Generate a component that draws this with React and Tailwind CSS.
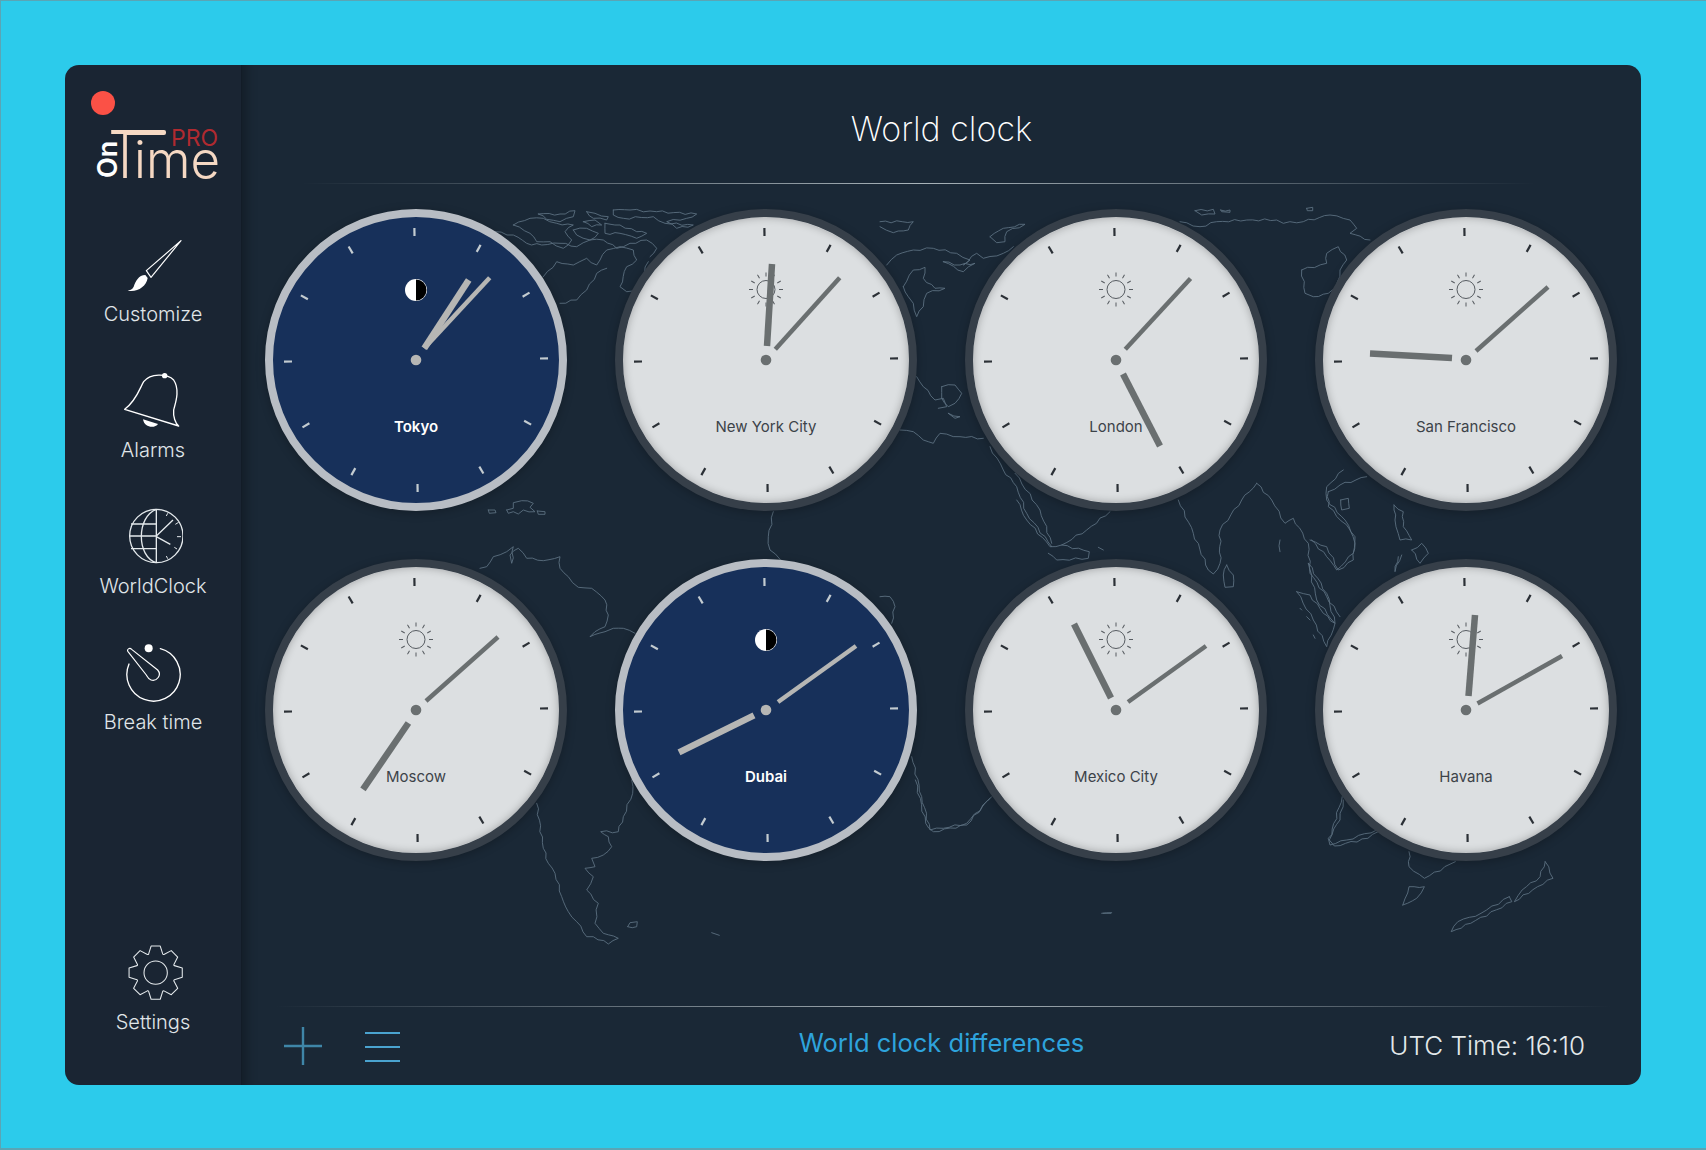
const CLOCKS = [
  { city: 'Tokyo', night: true, hour: [8.3, -11.7, 52.7, -80], min: [8.3, -11.7, 73.7, -82.3] },
  { city: 'New York City', hour: [1, -14, 6, -96], min: [9.3, -10.7, 73.7, -82.3] },
  { city: 'London', hour: [7, 14, 44, 86], min: [9.3, -10.7, 74.5, -81.6] },
  { city: 'San Francisco', hour: [-14, -2, -96, -6.5], min: [10, -9, 82, -73] },
  { city: 'Moscow', hour: [-7.6, 13, -53, 79.4], min: [10, -9, 82, -73] },
  { city: 'Dubai', night: true, hour: [-12, 5.4, -87, 42.4], min: [12, -8, 90, -64] },
  { city: 'Mexico City', hour: [-5, -12, -42, -86], min: [12, -8, 90, -64] },
  { city: 'Havana', hour: [2.5, -14, 9, -95], min: [11.5, -6.5, 96, -54] },
]

// coastlines traced from crops: [left, top, x scale, y scale, polylines]
const COASTS = [
  [480, 190, 3, 3, [
    '100,105 150,85 190,85 230,100 280,105 255,125 275,150 250,175 210,155 170,155 150,130 100,105',
    '175,72 240,72 285,62 280,80 240,95 200,88 175,72',
    '320,65 345,70 385,80 380,90 340,85 320,65',
    '400,60 450,60 530,65 650,72 620,85 560,95 590,115 640,105 555,100 520,80 430,85 400,75 400,60',
    '280,120 320,115 355,130 330,150 290,135 280,120',
    '310,95 345,90 365,105 335,110 310,95',
    '375,100 420,105 470,125 500,130 470,145 420,130 375,130 375,100',
    '45,125 100,135 140,160 185,165 240,160 290,170 330,150 370,150 410,175 450,160 500,150 530,175 510,200',
    '190,260 230,215 280,225 320,205 350,225 380,180 420,170 460,180 470,210 440,230 420,290 440,305 470,300 505,215',
    '240,340 290,330 320,300 350,250 380,235',
  ]],
  [480, 500, 3, 3, [
    '25,30 45,30 48,38 28,40 25,30',
    '80,30 100,25 100,8 125,2 160,10 150,22 165,35 130,30 115,42 100,35 85,40 80,30',
    '172,33 195,35 195,43 175,43 172,33',
    '0,205 20,200 40,170 80,155 100,140 95,190 90,165 115,145 140,175 190,182 240,170 240,205 265,230 295,262 335,265 375,300 385,345 375,380 345,395 330,410 375,395 400,385 430,385 465,400',
    '455,840 458,880 430,950 415,995 362,995 385,1010 395,1040 370,1065 335,1075 345,1100 315,1105 340,1130 320,1170 355,1210 345,1270 370,1300 415,1315 385,1332 340,1310 320,1310 290,1265 265,1235 245,1190 225,1120 205,1090 190,1045 170,910',
    '443,1280 450,1268 472,1265 470,1280 443,1280',
    '695,1298 718,1306',
    '880,35 865,110 870,150 900,178',
  ]],
  [880, 190, 3, 3, [
    '0,95 100,95 85,120 40,128 0,110',
    '330,140 370,115 435,103 380,125 375,155 350,158 330,140',
    '20,225 50,195 100,180 160,175 230,190 270,210 250,225 290,190 310,205 370,190 400,170',
    '190,215 240,225 285,220 250,245 190,215',
    '70,290 100,240 135,232 130,265 165,295 195,295 140,310 130,350 110,380 100,340 85,320 70,290',
    '110,560 130,590 165,630 190,625 200,650 175,655',
    '185,590 225,585 245,610 225,640 205,650 185,625 185,590',
    '205,670 240,680 225,685 205,670',
    '60,720 100,725 130,750 160,760 180,730 240,740 310,745',
    '330,770 370,840 410,890 440,970 515,1070',
    '405,850 480,960 515,1060',
    '900,95 960,110 1010,95 1100,90 1190,90 1210,100 1270,95 1350,75 1410,90 1430,115 1410,130 1470,150',
    '945,62 1000,58 1005,72 965,75 945,62',
    '1022,60 1050,60 1050,67 1025,65 1022,60',
    '1280,55 1298,52 1298,62 1282,62 1280,55',
    '1265,240 1340,220 1340,190 1375,170 1400,210 1380,240 1370,295 1345,310 1300,320 1275,310 1265,240',
  ]],
  [880, 500, 3, 3, [
    '895,0 940,100 985,210 1000,222 1020,190 1020,90 1085,0 1130,-50',
    '1040,195 1060,225 1060,260 1035,262 1030,225 1040,195',
    '1130,-50 1175,0 1215,70 1240,55 1285,130 1290,220 1340,290 1380,350',
    '1295,120 1340,170 1370,210 1420,160 1425,110 1395,60 1340,0 1340,-40 1390,-90',
    '1285,190 1340,280 1365,370 1310,300 1285,190',
    '1250,275 1290,285 1330,340 1365,370 1340,440 1300,360 1250,275',
    '1200,120 1200,155',
    '1260,325 1265,330',
    '1280,350 1290,360',
    '1300,405 1305,415',
    '95,770 125,890 150,990 190,985 260,970 335,890',
    '0,290 30,290 45,320 35,370',
    '410,0 440,60 510,140 545,135 620,90 690,35',
    '505,160 530,180 625,175 628,155 545,135',
    '655,142 670,150',
    '1390,900 1380,960 1345,1015 1350,1035 1400,1020 1490,990',
    '665,1240 695,1238',
  ]],
  [1240, 190, 3, 3, [
    '462,945 490,965 490,1010 515,1050 480,1050 465,990 462,945',
    '515,1080 545,1060 565,1090 540,1120 515,1080',
    '475,1100 465,1145 485,1095',
    '265,905 300,885 380,860',
    '265,905 265,950 330,1020 345,1060 340,1110 295,1140 260,1070 210,1050',
    '302,930 325,925 328,955 305,960 302,930',
  ]],
  [900, 780, 1.945, 3, [
    '30,0 50,130 65,155 130,135 175,55',
    '860,50 835,180 845,198 910,175 930,155',
    '990,215 990,260 1020,295 1080,245',
    '978,375 990,320 1020,320 1005,355 978,375',
    '1255,245 1245,290 1210,330 1195,365 1240,320 1270,295 1255,245',
    '1185,350 1130,400 1085,425 1072,455 1110,430 1190,365 1185,350',
    '395,400 410,400',
  ]],
]

const coastPath = (ox, oy, kx, ky, line) => {
  const pts = line.split(' ').map((p) => {
    const [x, y] = p.split(',').map(Number)
    return [ox + x / kx, oy + y / ky]
  })
  let d = `M${pts[0][0].toFixed(1)},${pts[0][1].toFixed(1)}`
  pts.slice(1).forEach(([x, y], i) => {
    const [px, py] = pts[i]
    const len = Math.hypot(x - px, y - py)
    const steps = Math.max(1, Math.round(len / 6))
    for (let s = 1; s <= steps; s++) {
      // small fixed wobble so the outlines read as coast and not as straight segments
      const wob = s === steps ? 0 : Math.sin((px + py) * 3.1 + s * 2.3) * 1.1
      const qx = px + ((x - px) * s) / steps - ((y - py) / len) * wob
      const qy = py + ((y - py) * s) / steps + ((x - px) / len) * wob
      d += `L${qx.toFixed(1)},${qy.toFixed(1)}`
    }
  })
  return d
}

const COAST_PATHS = COASTS.flatMap(([ox, oy, kx, ky, lines]) => lines.map((l) => coastPath(ox, oy, kx, ky, l)))

function WorldMap({ viewBox, stroke, opacity, width }) {
  return (
    <svg className="absolute inset-0 w-full h-full" viewBox={viewBox} fill="none" stroke={stroke} strokeOpacity={opacity} strokeWidth={width} strokeLinejoin="round" strokeLinecap="round">
      {COAST_PATHS.map((d, i) => <path key={i} d={d} />)}
    </svg>
  )
}

function Clock({ data, index }) {
  const { city, night, hour, min } = data
  const cx = 416 + (index % 4) * 350
  const cy = 360 + Math.floor(index / 4) * 350
  const handColor = night ? '#b6b6b4' : '#6a6f70'
  const tickColor = night ? '#c3cbd0' : '#2b3036'

  return (
    <div className={`relative w-[302px] h-[302px] rounded-full border-[8px] overflow-hidden shadow-[0_2px_10px_rgba(0,0,0,0.25)]
      ${night ? 'border-[#b8bdc4] bg-[#17305a]' : 'border-[#363f49] bg-[#dcdfe1]'}`}>
      <WorldMap viewBox={`${cx - 143} ${cy - 143} 286 286`} stroke="#ffffff" opacity={night ? 0.07 : 0.4} width={1} />
      {!night && <div className="absolute inset-0 rounded-full shadow-[inset_0_0_9px_rgba(0,0,0,0.28)]" />}
      <svg className="absolute inset-0" width="286" height="286" viewBox="-143 -143 286 286">
        {Array.from({ length: 12 }, (_, h) => (
          <line key={h} x1="0" y1="-132" x2="0" y2="-124" stroke={tickColor} strokeWidth="2.2" transform={`rotate(${h * 30 - 0.7})`} />
        ))}
        {night ? (
          <g>
            <circle cx="0" cy="-70" r="11" fill="#ffffff" />
            <path d="M0,-80.5 A10.5,10.5 0 0 1 0,-59.5 Z" fill="#000000" />
          </g>
        ) : (
          <g stroke="#565b60" strokeWidth="1" fill="none">
            <circle cx="0" cy="-70.5" r="9" />
            {Array.from({ length: 12 }, (_, r) => (
              <line key={r} x1="0" y1="-83.5" x2="0" y2="-87.5" transform={`rotate(${r * 30} 0 -70.5)`} />
            ))}
          </g>
        )}
        <line x1={hour[0]} y1={hour[1]} x2={hour[2]} y2={hour[3]} stroke={handColor} strokeWidth="6.5" />
        <line x1={min[0]} y1={min[1]} x2={min[2]} y2={min[3]} stroke={handColor} strokeWidth="4.5" />
        <circle cx="0" cy="0" r="5.3" fill={handColor} />
      </svg>
      <span className={`absolute left-0 right-0 top-[198px] text-center text-[15px] leading-[24px] ${night ? 'text-white font-semibold' : 'text-[#3c4349]'}`}>
        {city}
      </span>
    </div>
  )
}

function Logo() {
  return (
    <svg className="overflow-visible" width="140" height="60" viewBox="90 125 140 60">
      <text x="117" y="178" transform="rotate(-90 117 178)" fontSize="27" fontWeight="600" fill="#ffffff" fontFamily="Inter, sans-serif">On</text>
      <text x="108.5" y="178" fontSize="66" fontWeight="300" fill="#f5d8c3" fontFamily="Inter, sans-serif" textLength="33" lengthAdjust="spacingAndGlyphs">T</text>
      <rect x="125" y="130" width="41" height="5" rx="2" fill="#f5d8c3" />
      <text x="134" y="178" fontSize="51" fontWeight="300" fill="#f5d8c3" fontFamily="Inter, sans-serif" textLength="86" lengthAdjust="spacingAndGlyphs">ime</text>
      <text x="171" y="146" fontSize="23" fontWeight="400" fill="#b02a30" fontFamily="Inter, sans-serif">PRO</text>
    </svg>
  )
}

const gearPath = () => {
  const cx = 286
  const cy = 158
  let d = ''
  for (let i = 0; i < 8; i++) {
    const a = (i * Math.PI) / 4 - Math.PI / 2
    const at = (r, off) => `${(cx + r * Math.cos(a + off)).toFixed(1)},${(cy + r * Math.sin(a + off)).toFixed(1)}`
    d += `${i ? 'L' : 'M'}${at(60, -0.36)} L${at(81, -0.17)} L${at(81, 0.17)} L${at(60, 0.36)} Q${at(58, 0.39)} ${at(60, 0.43)} `
  }
  return d + 'Z'
}

const NAV = [
  {
    label: 'Customize',
    box: '188 528 180 180',
    icon: (
      <>
        <path d="M258,632 L362,542 L272,652 Z" fill="none" stroke="#fff" strokeWidth="3.5" strokeLinejoin="round" />
        <path d="M255,645 C235,645 225,665 220,680 C215,690 208,690 202,692 C230,698 258,680 262,654 Z" fill="#fff" />
      </>
    ),
  },
  {
    label: 'Alarms',
    box: '188 36 180 180',
    icon: (
      <>
        <path d="M193,148 C230,120 240,80 250,65 C270,40 320,40 340,60 C360,90 345,130 340,150 C338,170 345,190 355,198 Z" fill="none" stroke="#fff" strokeWidth="4" strokeLinejoin="round" />
        <circle cx="313" cy="47" r="8" fill="#fff" />
        <path d="M248,178 C252,205 285,205 293,192 Z" fill="#fff" />
      </>
    ),
  },
  {
    label: 'WorldClock',
    box: '188 444 180 180',
    icon: (
      <g fill="none" stroke="#e4e9ec" strokeWidth="4">
        <circle cx="288" cy="528" r="80" />
        <path d="M288,448 V608 M288,448 C228,470 228,590 288,608 M212,492 H288 M208,528 H288 M212,566 H288 M288,528 L338,480 M288,530 L330,553" />
        <path d="M318,468 L322,460 M345,493 L355,487 M350,530 H362 M342,562 L350,567 M318,588 L322,596" strokeWidth="3" />
      </g>
    ),
  },
  {
    label: 'Break time',
    box: '188 852 180 180',
    icon: (
      <g fill="none" stroke="#fff" strokeWidth="4" strokeLinejoin="round">
        <path d="M300,866 A80,80 0 1 1 206,912" strokeLinecap="round" />
        <path d="M203,875 C198,868 208,862 214,868 L292,930 C305,945 290,965 272,960 C265,958 262,952 258,945 Z" strokeWidth="3.5" />
        <circle cx="265" cy="865" r="12" fill="#fff" stroke="none" />
      </g>
    ),
  },
]

function NavItem({ label, box, gap = 'mt-[6px]', children }) {
  return (
    <div className="h-[136px] flex flex-col items-center">
      <svg width="60" height="60" viewBox={box}>{children}</svg>
      <span className={`${gap} text-[20px] leading-[24px] font-light text-[#e0e6e9]`}>{label}</span>
    </div>
  )
}

export default function App() {
  return (
    <div className="w-[1706px] h-[1150px] bg-[#2ccbeb] pt-[64px] pl-[64px] pr-[65px] pb-[63px] border-t border-l border-b-2 border-[#5aa5b5] font-['Inter',sans-serif]">
      <div className="flex h-[1020px] rounded-[14px] overflow-hidden">
        {/* Sidebar */}
        <aside className="w-[177px] shrink-0 flex flex-col bg-[#1a2533] border-r border-[#121c27]">
          <div className="mt-[26px] ml-[26px] w-[24px] h-[24px] rounded-full bg-[#fb5146]" />
          <div className="mt-[10px] ml-[25px]"><Logo /></div>
          <nav className="mt-[51px] flex flex-col">
            {NAV.map((n) => <NavItem key={n.label} label={n.label} box={n.box}>{n.icon}</NavItem>)}
          </nav>
          <div className="mt-auto mb-[7px]">
            <NavItem label="Settings" box="188 66 180 180" gap="mt-[8px]">
              <path d={gearPath()} fill="none" stroke="#e4e9ec" strokeWidth="3.2" strokeLinejoin="round" />
              <circle cx="286" cy="158" r="35" fill="none" stroke="#e4e9ec" strokeWidth="3.2" />
            </NavItem>
          </div>
        </aside>

        {/* Main */}
        <main className="relative flex-1 bg-[#1a2836] shadow-[inset_14px_0_12px_-10px_rgba(0,0,0,0.3)]">
          <WorldMap viewBox="242 65 1399 1020" stroke="#5b6f80" opacity={0.9} width={1} />
          <div className="relative flex flex-col h-full">
            <header className="h-[118px] flex items-center justify-center">
              <h1 className="text-[34px] leading-[44px] font-extralight text-white mt-[9px]">World clock</h1>
            </header>
            <div className="h-px ml-[60px] mr-[106px] bg-gradient-to-r from-transparent via-[#a9b4ba] to-transparent" />
            <div className="pt-[25px] pl-[23px] grid grid-cols-[repeat(4,302px)] gap-[48px]">
              {CLOCKS.map((c, i) => <Clock key={c.city} data={c} index={i} />)}
            </div>
            <div className="mt-[145px] h-px ml-[33px] mr-[29px] bg-gradient-to-r from-transparent via-[#a9b4ba] to-transparent" />
            <footer className="flex-1 grid grid-cols-[1fr_auto_1fr] items-center">
              <div className="pl-[42px] flex items-center gap-[43px]">
                <svg width="38" height="38" viewBox="0 0 38 38" stroke="#3f86a8" strokeWidth="2.4">
                  <path d="M19,0 V38 M0,19 H38" />
                </svg>
                <div className="w-[35px] flex flex-col gap-[12px] mt-[2px]">
                  <div className="h-[2px] bg-[#4aa3cf]" />
                  <div className="h-[2px] bg-[#4aa3cf]" />
                  <div className="h-[2px] bg-[#4aa3cf]" />
                </div>
              </div>
              <div className="text-[25.5px] leading-[32px] text-[#2ea3dc] pb-[6px]">World clock differences</div>
              <div className="text-right pr-[56px] text-[26px] leading-[32px] font-light text-[#e3e8ea]">UTC Time: 16:10</div>
            </footer>
          </div>
        </main>
      </div>
    </div>
  )
}
